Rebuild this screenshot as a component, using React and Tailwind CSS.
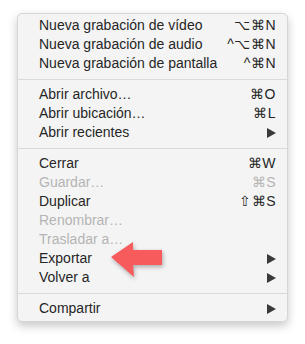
import React from 'react';

const sections = [
    [
        { label: 'Nueva grabación de vídeo', key: '⌥⌘N' },
        { label: 'Nueva grabación de audio', key: '^⌥⌘N' },
        { label: 'Nueva grabación de pantalla', key: '^⌘N' },
    ],
    [
        { label: 'Abrir archivo…', key: '⌘O' },
        { label: 'Abrir ubicación…', key: '⌘L' },
        { label: 'Abrir recientes', sub: true },
    ],
    [
        { label: 'Cerrar', key: '⌘W' },
        { label: 'Guardar…', key: '⌘S', disabled: true },
        { label: 'Duplicar', key: '⇧⌘S' },
        { label: 'Renombrar…', disabled: true },
        { label: 'Trasladar a…', disabled: true },
        { label: 'Exportar', sub: true, arrow: true },
        { label: 'Volver a', sub: true },
    ],
    [
        { label: 'Compartir', sub: true },
    ],
];

function SubArrow() {
    return (
        <svg width="9" height="10" viewBox="0 0 9 10" className="block">
            <path d="M0 0 L9 5 L0 10 Z" fill="#3a3a3a" />
        </svg>
    );
}

// red pointer laid over the menu, next to "Exportar"
function RedArrow() {
    return (
        <svg
            width="66"
            height="46"
            viewBox="0 0 66 46"
            className="absolute left-[82px] -top-[13px] drop-shadow-[1px_2px_2px_rgba(0,0,0,0.3)]"
        >
            <path d="M11 21 L33 6 L33 14 L62 14 L62 29 L33 29 L34 41 Z" fill="#f75b5b" />
        </svg>
    );
}

function Row({ item }) {
    const color = item.disabled ? 'text-[#b4b4b4]' : 'text-[#262626]';
    return (
        <div className={`relative flex h-[19px] items-center justify-between pl-[21px] pr-[11px] ${color}`}>
            <span>{item.label}</span>
            {item.key && <span className="tracking-[0.5px]">{item.key}</span>}
            {item.sub && <SubArrow />}
            {item.arrow && <RedArrow />}
        </div>
    );
}

export default function App() {
    return (
        <div className="h-[344px] w-[305px] bg-white pl-[17px] pt-[13px]">
            <div
                className="w-[271px] rounded-[5px] border border-[#d6d6d6] bg-[#f4f4f4] pt-[2px] pb-[3px] text-[14px] shadow-[0_4px_10px_rgba(0,0,0,0.22)]"
                style={{ fontFamily: '"Liberation Sans", Arial, sans-serif' }}
            >
                {sections.map((section, i) => (
                    <div key={i}>
                        {i > 0 && <div className="mt-[6px] mb-[5px] h-px bg-[#dadada]" />}
                        {section.map(item => (
                            <Row key={item.label} item={item} />
                        ))}
                    </div>
                ))}
            </div>
        </div>
    );
}
